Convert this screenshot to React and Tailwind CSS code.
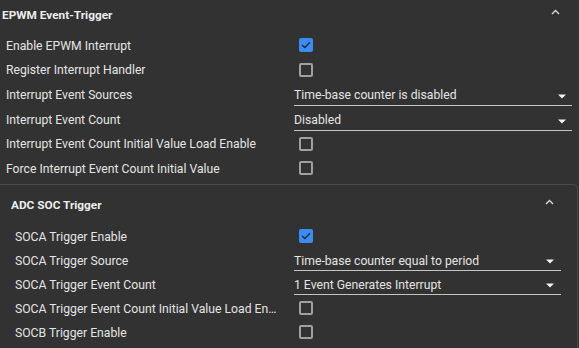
import React from "react";

function Check({ checked }) {
  if (checked) {
    return (
      <div className="ml-[5px] w-[14px] h-[14px] rounded-[2px] bg-[#3b8cf2] flex items-center justify-center">
        <svg width="10" height="8" viewBox="0 0 10 8" fill="none">
          <path d="M1 4 L3.8 6.6 L9 1.2" stroke="#1f2a3a" strokeWidth="1.4" />
        </svg>
      </div>
    );
  }
  return <div className="ml-[5px] w-[14px] h-[14px] rounded-[2px] border-2 border-[#a0a0a0]" />;
}

function Select({ value, inner }) {
  return (
    <div
      className={
        inner
          ? "relative h-[22px] pt-[2px] flex items-center border-b border-[#c4c4c4] w-full"
          : "relative h-[23px] pt-[3px] flex items-center border-b border-[#c4c4c4] w-full"
      }
    >
      <span className="text-[12.2px] text-[#e4e4e4] leading-[16px]">{value}</span>
      <svg
        className={inner ? "absolute right-[7px] top-[10px]" : "absolute right-[6px] top-[11px]"}
        width="8"
        height="5"
        viewBox="0 0 8 5"
      >
        <path d="M0 0.5 H8 L4 4.5 Z" fill="#f2f2f2" />
      </svg>
    </div>
  );
}

function Chevron() {
  return (
    <svg width="9" height="6" viewBox="0 0 9 6" fill="none">
      <path d="M1 5 L4.5 1.5 L8 5" stroke="#d8d8d8" strokeWidth="1.4" />
    </svg>
  );
}

function Row({ label, control, inner }) {
  return (
    <div className={inner ? "h-[24px] flex items-center" : "h-[24.6px] flex items-center"}>
      <div
        className={
          inner
            ? "w-[279px] pr-[14px] pt-[1px] truncate text-[12.2px] text-[#e4e4e4] leading-[16px]"
            : "w-[288px] pt-[1px] truncate text-[12.2px] text-[#e4e4e4] leading-[16px]"
        }
      >
        {label}
      </div>
      <div className="flex-1 min-w-0 flex items-center">{control}</div>
    </div>
  );
}

export default function App() {
  return (
    <div className="w-[579px] h-[348px] bg-[#323232] overflow-hidden font-['Roboto',sans-serif] flex flex-col">
      <div className="h-[33px] pb-[3px] flex items-center justify-between pl-[2px] pr-[19px] shrink-0">
        <span className="text-[11.8px] font-bold text-[#ececec] leading-[16px]">EPWM Event-Trigger</span>
        <span className="mb-[6px]">
          <Chevron />
        </span>
      </div>
      <div className="pl-[6px] pr-[7px] shrink-0">
        <Row label="Enable EPWM Interrupt" control={<Check checked />} />
        <Row label="Register Interrupt Handler" control={<Check />} />
        <Row label="Interrupt Event Sources" control={<Select value="Time-base counter is disabled" />} />
        <Row label="Interrupt Event Count" control={<Select value="Disabled" />} />
        <Row label="Interrupt Event Count Initial Value Load Enable" control={<Check />} />
        <Row label="Force Interrupt Event Count Initial Value" control={<Check />} />
      </div>
      <div className="mt-[3.5px] mr-[1px] border-t border-r border-[#4a4a4a] rounded-tr-[5px] flex-1 flex flex-col">
        <div className="h-[39px] flex items-center justify-between pl-[11px] pr-[23px] shrink-0">
          <span className="text-[11.8px] font-bold text-[#ececec] leading-[16px]">ADC SOC Trigger</span>
          <span className="mb-[5px]">
            <Chevron />
          </span>
        </div>
        <div className="pl-[15px] pr-[16px]">
          <Row inner label="SOCA Trigger Enable" control={<Check checked />} />
          <Row inner label="SOCA Trigger Source" control={<Select inner value="Time-base counter equal to period" />} />
          <Row inner label="SOCA Trigger Event Count" control={<Select inner value="1 Event Generates Interrupt" />} />
          <Row inner label="SOCA Trigger Event Count Initial Value Load Enable" control={<Check />} />
          <Row inner label="SOCB Trigger Enable" control={<Check />} />
        </div>
      </div>
    </div>
  );
}
